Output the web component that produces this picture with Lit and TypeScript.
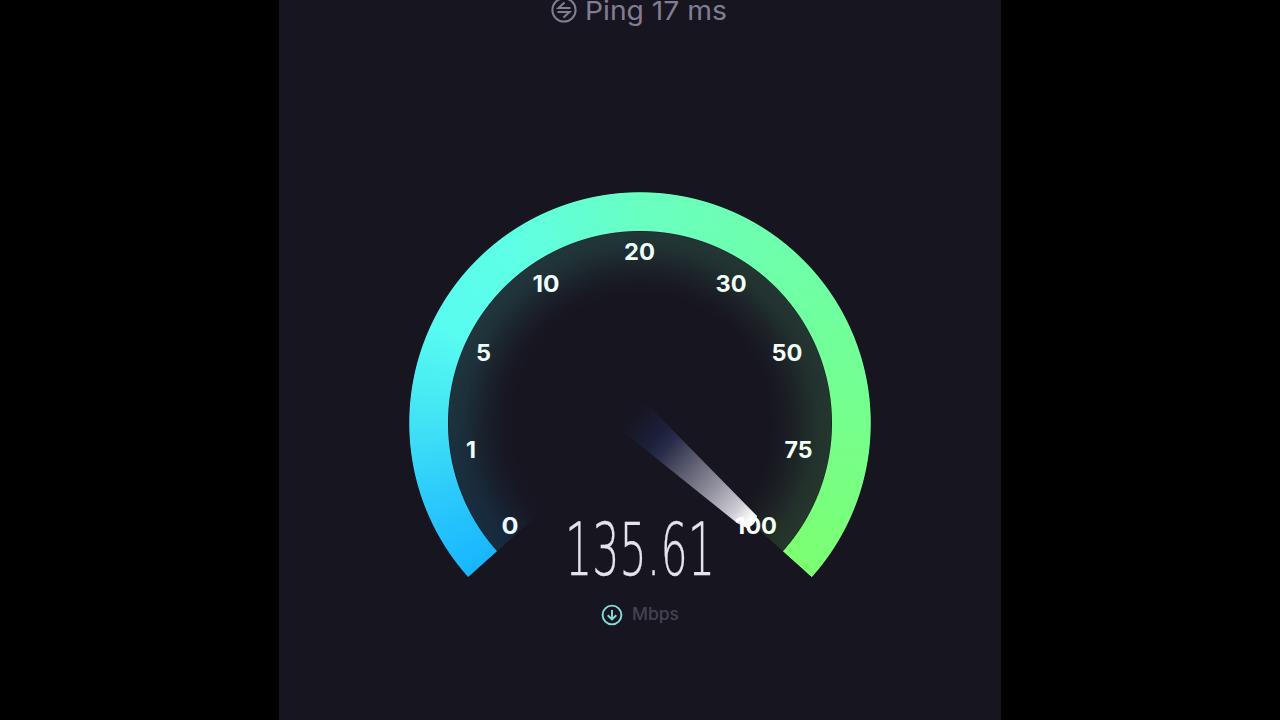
import { LitElement, css, html, svg } from "lit";
import { customElement, property } from "lit/decorators.js";

interface Mark {
  text: string;
  x: number;
  y: number;
  width: number;
}

// label centers and baselines, relative to the 462x462 dial
const MARKS: Mark[] = [
  { text: "0", x: 101, y: 341.5, width: 17 },
  { text: "1", x: 62, y: 266, width: 10 },
  { text: "5", x: 74.5, y: 169, width: 15 },
  { text: "10", x: 137, y: 100, width: 27 },
  { text: "20", x: 230.5, y: 67.5, width: 31 },
  { text: "30", x: 322, y: 100, width: 31 },
  { text: "50", x: 378, y: 169, width: 31 },
  { text: "75", x: 389.5, y: 266, width: 28 },
  { text: "100", x: 347, y: 341.5, width: 42 },
];

@customElement("speed-gauge")
export class SpeedGauge extends LitElement {
  static styles = css`
    :host {
      display: grid;
      width: 462px;
      height: 462px;
    }

    .layer {
      grid-area: 1 / 1;
      width: 462px;
      height: 462px;
    }

    .arc,
    .glow {
      background: conic-gradient(
        from 228deg,
        rgba(24, 182, 255, 0) 0deg,
        #18b6ff 0.25deg,
        #2ccafb 22deg,
        #42e4f5 43deg,
        #58fcf0 68deg,
        #5effe6 95deg,
        #63ffd2 115deg,
        #69ffc2 132deg,
        #6dffae 165deg,
        #72ff96 205deg,
        #78ff82 240deg,
        #7cff70 263.8deg,
        rgba(124, 255, 112, 0) 264deg
      );
    }

    .arc {
      mask: radial-gradient(
        circle,
        transparent 191.5px,
        #000 192.5px,
        #000 230.3px,
        transparent 231.2px
      );
    }

    .glow {
      opacity: 0.14;
      mask: radial-gradient(
        circle,
        transparent 126px,
        rgba(0, 0, 0, 0.12) 140px,
        rgba(0, 0, 0, 0.45) 158px,
        rgba(0, 0, 0, 0.85) 176px,
        #000 191px,
        transparent 192px
      );
    }

    .mark {
      font: 700 23px Inter, "Open Sans", sans-serif;
      fill: #fff;
      text-anchor: middle;
    }
  `;

  render() {
    return html`
      <div class="layer glow"></div>
      <div class="layer arc"></div>
      <svg class="layer" viewBox="0 0 462 462">
        <defs>
          <linearGradient
            id="needle"
            gradientUnits="userSpaceOnUse"
            x1="222"
            y1="224"
            x2="344"
            y2="332"
          >
            <stop offset="0" stop-color="#1b2140" stop-opacity="0" />
            <stop offset="0.2" stop-color="#1c2342" stop-opacity="0.75" />
            <stop offset="0.3" stop-color="#2b2e4a" />
            <stop offset="0.45" stop-color="#55566b" />
            <stop offset="0.68" stop-color="#93929f" />
            <stop offset="0.87" stop-color="#cfced6" />
            <stop offset="0.97" stop-color="#fff" />
          </linearGradient>
        </defs>
        <path
          fill="url(#needle)"
          d="M233 207 L348 324 Q347 333 338 336 L328 331 L207 234 Z"
        />
        ${MARKS.map(
          (m) => svg`<text
            class="mark"
            x=${m.x}
            y=${m.y}
            textLength=${m.width}
            lengthAdjust="spacingAndGlyphs"
          >${m.text}</text>`
        )}
      </svg>
    `;
  }
}

@customElement("app-root")
export class AppRoot extends LitElement {
  @property({ type: Number }) ping = 17;
  @property({ type: String }) speed = "135.61";

  static styles = css`
    :host {
      display: flex;
      justify-content: center;
      height: 720px;
      overflow: hidden;
      background: #000;
    }

    .screen {
      display: flex;
      flex-direction: column;
      align-items: center;
      width: 722px;
      height: 720px;
      background: #171520;
    }

    .ping {
      display: flex;
      align-items: flex-start;
      gap: 8px;
      height: 22px;
      color: #827e91;
    }

    .ping-icon {
      margin: -3px 0 0 -2px;
    }

    .ping-text {
      width: 142px;
      height: 30px;
      overflow: visible;
      font: 400 26px Inter, sans-serif;
      fill: currentColor;
    }

    .dial {
      height: 328px;
      margin-top: 170px;
    }

    .speed {
      width: 150px;
      height: 60px;
      overflow: visible;
      font: 200 73.5px "DejaVu Sans", sans-serif;
      fill: #e6e2ee;
      stroke: #e6e2ee;
      stroke-width: 0.35px;
    }

    .unit {
      display: flex;
      align-items: center;
      gap: 9px;
      height: 22px;
      margin-top: 24px;
    }

    .unit-text {
      width: 48px;
      height: 22px;
      overflow: visible;
      font: 500 17px Inter, sans-serif;
      fill: #464351;
    }
  `;

  render() {
    return html`
      <main class="screen">
        <div class="ping">
          <svg class="ping-icon" width="26" height="26" viewBox="0 0 26 26" fill="none" stroke="currentColor" stroke-width="2">
            <circle cx="13" cy="13" r="11.6" />
            <path d="M19.5 11H7.5L13.5 5.5M6.5 15H18.5L12.5 20.5" />
          </svg>
          <svg class="ping-text">
            <text y="20" textLength="142" lengthAdjust="spacingAndGlyphs">Ping ${this.ping} ms</text>
          </svg>
        </div>
        <speed-gauge class="dial"></speed-gauge>
        <svg class="speed">
          <text y="55" textLength="150" lengthAdjust="spacingAndGlyphs">${this.speed}</text>
        </svg>
        <div class="unit">
          <svg width="22" height="22" viewBox="0 0 22 22" fill="none" stroke="#83dfdc" stroke-width="1.9">
            <circle cx="11" cy="11" r="9.4" />
            <path d="M11 6V15.5M6.7 11.3L11 15.5L15.3 11.3" />
          </svg>
          <svg class="unit-text">
            <text y="16" textLength="47" lengthAdjust="spacingAndGlyphs">Mbps</text>
          </svg>
        </div>
      </main>
    `;
  }
}
